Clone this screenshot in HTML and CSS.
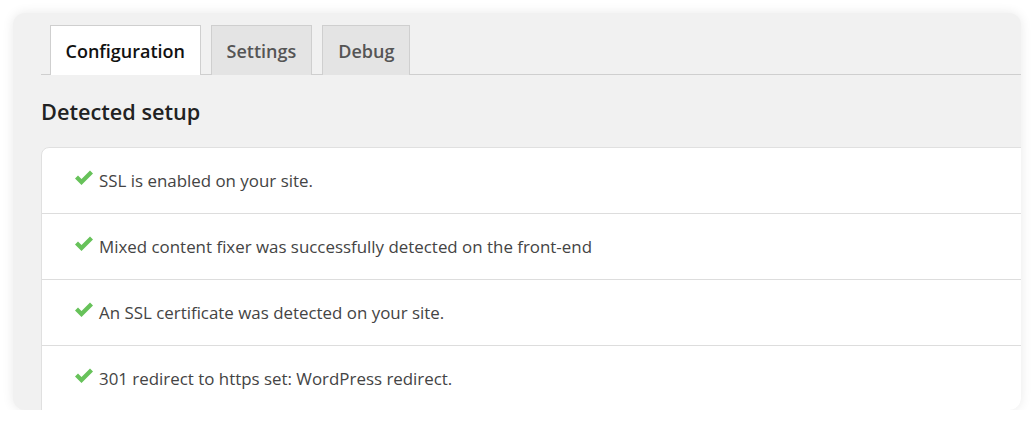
FILE: index.html
```html
<!DOCTYPE html>
<html>
<head>
<meta charset="utf-8">
<link rel="stylesheet" href="styles.css">
</head>
<body>
<div class="panel">
  <div class="tabs">
    <div class="tab active">Configuration</div>
    <div class="tab">Settings</div>
    <div class="tab">Debug</div>
  </div>
  <h2 class="heading">Detected setup</h2>
  <div class="card">
    <div class="row"><svg class="check" viewBox="0 0 18 16"><polygon points="0,8.5 3,5.5 6.5,9 15,0.5 18,3.5 6.5,15"/></svg><span>SSL is enabled on your site.</span></div>
    <div class="row"><svg class="check" viewBox="0 0 18 16"><polygon points="0,8.5 3,5.5 6.5,9 15,0.5 18,3.5 6.5,15"/></svg><span>Mixed content fixer was successfully detected on the front-end</span></div>
    <div class="row"><svg class="check" viewBox="0 0 18 16"><polygon points="0,8.5 3,5.5 6.5,9 15,0.5 18,3.5 6.5,15"/></svg><span>An SSL certificate was detected on your site.</span></div>
    <div class="row"><svg class="check" viewBox="0 0 18 16"><polygon points="0,8.5 3,5.5 6.5,9 15,0.5 18,3.5 6.5,15"/></svg><span>301 redirect to https set: WordPress redirect.</span></div>
  </div>
</div>
</body>
</html>
```
FILE: styles.css
```css
html, body {
  margin: 0;
  background: #ffffff;
}
body {
  padding: 13px 15px 0 13px;
  font-family: "Open Sans", "Noto Sans", sans-serif;
}
.panel {
  box-sizing: border-box;
  width: 1008px;
  height: 397px;
  background: #f1f1f1;
  border-radius: 12px;
  box-shadow: 0 0 12px rgba(0, 0, 0, 0.09);
  overflow: hidden;
  padding: 12px 0 0 28px;
}
.tabs {
  display: flex;
  gap: 10px;
  padding-left: 9px;
  border-bottom: 1px solid #cfcfcf;
  width: 1200px;
  height: 49px;
}
.tab {
  box-sizing: border-box;
  height: 50px;
  padding: 0 15px;
  display: flex;
  align-items: center;
  font-size: 18px;
  font-weight: 600;
  color: #555;
  background: #e4e4e4;
  border: 1px solid #cfcfcf;
  border-bottom: none;
}
.tab.active {
  padding: 0 14.5px;
  background: #fff;
  color: #111;
  position: relative;
  z-index: 1;
}
.heading {
  margin: 22px 0 20px 0;
  font-size: 21.7px;
  font-weight: 600;
  color: #222;
  line-height: 30px;
}
.card {
  width: 1200px;
  background: #fff;
  border: 1px solid #e0e0e0;
  border-radius: 8px 0 0 0;
}
.row {
  height: 65px;
  display: flex;
  align-items: center;
  padding-left: 33px;
  border-bottom: 1px solid #ddd;
  font-size: 16.9px;
  color: #444;
}
.check {
  width: 18px;
  height: 16px;
  margin-right: 6px;
  position: relative;
  top: -3px;
  fill: #67c25a;
}
```
